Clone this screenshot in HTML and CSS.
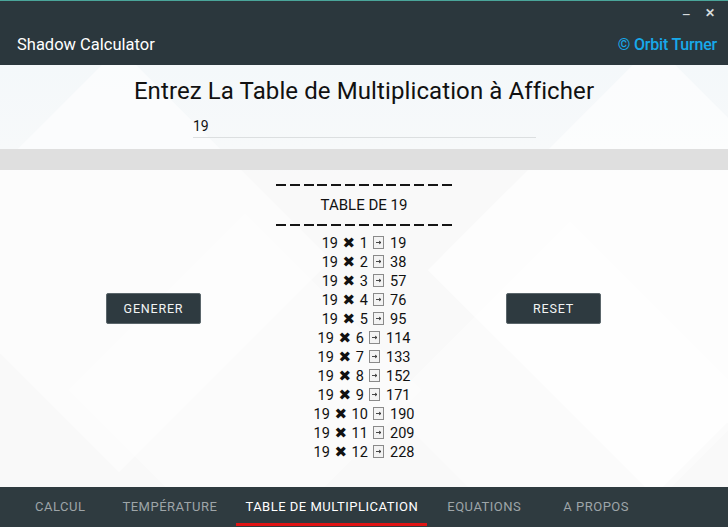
FILE: index.html
```html
<!DOCTYPE html>
<html lang="fr">
<head>
<meta charset="utf-8">
<title>Shadow Calculator</title>
<link rel="stylesheet" href="styles.css">
</head>
<body>
<div class="app">
  <header class="titlebar">
    <div class="controls">
      <span class="ctl min">&#8211;</span>
      <span class="ctl close">&#10005;</span>
    </div>
    <div class="titlerow">
      <span class="appname">Shadow Calculator</span>
      <span class="brand">&copy; Orbit Turner</span>
    </div>
  </header>

  <main class="main">
    <div class="deco d1"></div>
    <div class="deco d2"></div>
    <div class="deco d3"></div>
    <div class="deco d4"></div>
    <section class="head">
      <h1 class="title">Entrez La Table de Multiplication à Afficher</h1>
      <div class="field"><span class="value">19</span></div>
    </section>
    <div class="band"></div>
    <section class="work">
      <div class="side left"><button class="btn">GENERER</button></div>
      <div class="table">
        <div class="dashes"></div>
        <div class="tname">TABLE DE 19</div>
        <div class="dashes"></div>
        <div class="rows">
          <div class="row">19 <span class="x">&#10006;</span> 1 <span class="eq"><svg viewBox="0 0 11 13" width="11" height="13"><path d="M3 6.5h5M6 5l2 1.5L6 8" fill="none" stroke="#333" stroke-width="0.9"/></svg></span> 19</div>
          <div class="row">19 <span class="x">&#10006;</span> 2 <span class="eq"><svg viewBox="0 0 11 13" width="11" height="13"><path d="M3 6.5h5M6 5l2 1.5L6 8" fill="none" stroke="#333" stroke-width="0.9"/></svg></span> 38</div>
          <div class="row">19 <span class="x">&#10006;</span> 3 <span class="eq"><svg viewBox="0 0 11 13" width="11" height="13"><path d="M3 6.5h5M6 5l2 1.5L6 8" fill="none" stroke="#333" stroke-width="0.9"/></svg></span> 57</div>
          <div class="row">19 <span class="x">&#10006;</span> 4 <span class="eq"><svg viewBox="0 0 11 13" width="11" height="13"><path d="M3 6.5h5M6 5l2 1.5L6 8" fill="none" stroke="#333" stroke-width="0.9"/></svg></span> 76</div>
          <div class="row">19 <span class="x">&#10006;</span> 5 <span class="eq"><svg viewBox="0 0 11 13" width="11" height="13"><path d="M3 6.5h5M6 5l2 1.5L6 8" fill="none" stroke="#333" stroke-width="0.9"/></svg></span> 95</div>
          <div class="row">19 <span class="x">&#10006;</span> 6 <span class="eq"><svg viewBox="0 0 11 13" width="11" height="13"><path d="M3 6.5h5M6 5l2 1.5L6 8" fill="none" stroke="#333" stroke-width="0.9"/></svg></span> 114</div>
          <div class="row">19 <span class="x">&#10006;</span> 7 <span class="eq"><svg viewBox="0 0 11 13" width="11" height="13"><path d="M3 6.5h5M6 5l2 1.5L6 8" fill="none" stroke="#333" stroke-width="0.9"/></svg></span> 133</div>
          <div class="row">19 <span class="x">&#10006;</span> 8 <span class="eq"><svg viewBox="0 0 11 13" width="11" height="13"><path d="M3 6.5h5M6 5l2 1.5L6 8" fill="none" stroke="#333" stroke-width="0.9"/></svg></span> 152</div>
          <div class="row">19 <span class="x">&#10006;</span> 9 <span class="eq"><svg viewBox="0 0 11 13" width="11" height="13"><path d="M3 6.5h5M6 5l2 1.5L6 8" fill="none" stroke="#333" stroke-width="0.9"/></svg></span> 171</div>
          <div class="row">19 <span class="x">&#10006;</span> 10 <span class="eq"><svg viewBox="0 0 11 13" width="11" height="13"><path d="M3 6.5h5M6 5l2 1.5L6 8" fill="none" stroke="#333" stroke-width="0.9"/></svg></span> 190</div>
          <div class="row">19 <span class="x">&#10006;</span> 11 <span class="eq"><svg viewBox="0 0 11 13" width="11" height="13"><path d="M3 6.5h5M6 5l2 1.5L6 8" fill="none" stroke="#333" stroke-width="0.9"/></svg></span> 209</div>
          <div class="row">19 <span class="x">&#10006;</span> 12 <span class="eq"><svg viewBox="0 0 11 13" width="11" height="13"><path d="M3 6.5h5M6 5l2 1.5L6 8" fill="none" stroke="#333" stroke-width="0.9"/></svg></span> 228</div>
        </div>
      </div>
      <div class="side right"><button class="btn">RESET</button></div>
    </section>
  </main>

  <nav class="tabs">
    <span class="tab t1">CALCUL</span>
    <span class="tab t2">TEMPÉRATURE</span>
    <span class="tab t3 active">TABLE DE MULTIPLICATION</span>
    <span class="tab t4">EQUATIONS</span>
    <span class="tab t5">A PROPOS</span>
  </nav>
</div>
</body>
</html>
```

FILE: styles.css
```css
* { box-sizing: border-box; }
html, body { margin: 0; padding: 0; }
body {
  width: 728px;
  height: 527px;
  overflow: hidden;
  font-family: Roboto, "Liberation Sans", sans-serif;
  background: #fbfbfb;
}
.app {
  display: flex;
  flex-direction: column;
  height: 527px;
}
.titlebar {
  height: 65px;
  background: #2b373d;
  border-top: 1px solid #4aa59a;
  display: flex;
  flex-direction: column;
  flex: none;
}
.controls {
  display: flex;
  justify-content: flex-end;
  align-items: center;
  gap: 14px;
  height: 24px;
  padding-right: 13px;
  color: #d7dcde;
}
.ctl { font-size: 13px; line-height: 1; }
.ctl.min { font-size: 14px; margin-top: 4px; }
.ctl.close { font-size: 12px; font-weight: bold; }
.titlerow {
  display: flex;
  justify-content: space-between;
  align-items: center;
  padding: 10px 11px 0 17px;
}
.appname {
  color: #ffffff;
  font-size: 16.5px;
}
.brand {
  color: #17a9ea;
  font-size: 16px;
  font-weight: 500;
  letter-spacing: -0.2px;
}
.main {
  flex: 1;
  position: relative;
  display: flex;
  flex-direction: column;
  overflow: hidden;
  background: linear-gradient(180deg, #f4f8fa 0, #f7f9fa 84px, #f9f9f9 110px);
}
.deco {
  position: absolute;
  transform: rotate(45deg);
  z-index: 0;
}
.d1 { width: 300px; height: 300px; left: -31px; top: 45px; background: rgba(255,255,255,0.55); }
.d2 { width: 320px; height: 320px; left: 494px; top: 45px; background: rgba(255,255,255,0.6); }
.d3 { width: 250px; height: 250px; left: 120px; top: 200px; background: rgba(255,255,255,0.35); }
.d4 { width: 260px; height: 260px; left: 440px; top: 210px; background: rgba(255,255,255,0.4); }
.head, .band, .work { position: relative; z-index: 1; }
.head {
  height: 84px;
  display: flex;
  flex-direction: column;
  align-items: center;
}
.title {
  margin: 11px 0 0;
  font-size: 24px;
  font-weight: 400;
  color: #111;
  line-height: 30px;
  letter-spacing: 0.1px;
}
.field {
  width: 343px;
  margin-top: 10px;
  margin-left: 1px;
  border-bottom: 1px solid #dcdfe0;
  padding-bottom: 2px;
}
.value { font-size: 14px; color: #111; line-height: 18px; }
.band {
  height: 21px;
  background: #dfdfdf;
  flex: none;
}
.work {
  flex: 1;
  display: flex;
}
.side { width: 276px; }
.side.left { padding-left: 106px; padding-top: 123px; }
.side.right { padding-left: 54px; padding-top: 123px; }
.btn {
  width: 95px;
  height: 31px;
  background: #2e3a40;
  border: 1px solid #5b666b;
  border-radius: 2px;
  color: #f2f4f4;
  font-family: Roboto, "Liberation Sans", sans-serif;
  font-size: 12.5px;
  font-weight: 400;
  letter-spacing: 0.8px;
  padding: 0;
}
.table {
  width: 176px;
  display: flex;
  flex-direction: column;
  align-items: center;
  color: #111;
}
.dashes {
  width: 176px;
  height: 2px;
  flex: none;
  background: repeating-linear-gradient(90deg, #151515 0, #151515 10px, transparent 10px, transparent 13.8px);
}
.dashes:first-child { margin-top: 14px; }
.tname {
  font-size: 15px;
  line-height: 18px;
  margin: 10px 0 10px;
}
.rows {
  margin-top: 8px;
  display: flex;
  flex-direction: column;
  align-items: center;
}
.row {
  font-size: 14.5px;
  line-height: 19px;
  height: 19px;
  white-space: nowrap;
}
.x {
  font-family: "DejaVu Sans", sans-serif;
  font-size: 15px;
  font-weight: bold;
  margin: 0 1px;
}
.eq {
  display: inline-block;
  width: 11px;
  height: 13px;
  margin: 0 2px;
  border: 1px solid #8a8a8a;
  background: #f3f3f3;
  vertical-align: -1px;
  position: relative;
}
.eq svg { display: block; position: absolute; left: -1px; top: -1px; }
.tabs {
  height: 40px;
  flex: none;
  background: #2f3b40;
  display: flex;
  align-items: stretch;
}
.tab {
  color: #9ea5a8;
  font-size: 13px;
  letter-spacing: 0.5px;
  display: flex;
  align-items: center;
  justify-content: center;
  padding-top: 2px;
  border-bottom: 3px solid transparent;
  margin-bottom: 1px;
  white-space: nowrap;
}
.t1 { margin-left: 35px; }
.t2 { margin-left: 37px; }
.t3 { margin-left: 19px; width: 191px; }
.t4 { margin-left: 20px; }
.t5 { margin-left: 42px; }
.tab.active {
  color: #ffffff;
  border-bottom-color: #e01414;
}
```
